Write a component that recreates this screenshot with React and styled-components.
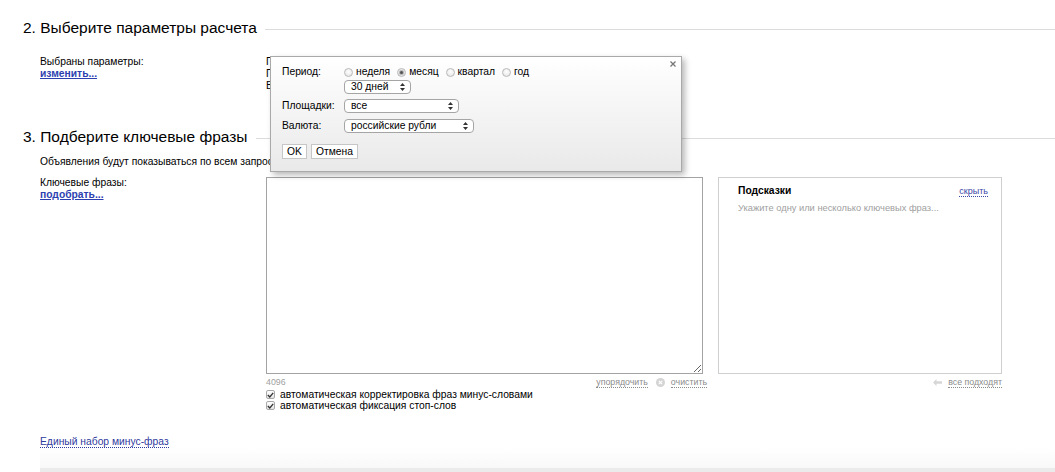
import React from "react";
import styled, { createGlobalStyle } from "styled-components";

const GlobalStyle = createGlobalStyle`
  html, body {
    margin: 0;
    padding: 0;
    background: #fff;
  }
  body {
    font-family: "Liberation Sans", Arial, sans-serif;
    font-size: 10.3px;
    color: #000;
  }
`;

const Page = styled.div`
  position: relative;
  width: 1055px;
  height: 472px;
  overflow: hidden;
  box-sizing: border-box;
  padding: 18px 0 0 23px;
`;

const Heading = styled.h2`
  display: flex;
  align-items: center;
  margin: ${(p) => p.$top || 0}px 0 0;
  font-size: 15.5px;
  font-weight: normal;
  line-height: 20px;
  white-space: nowrap;

  &::after {
    content: "";
    flex: 1;
    height: 1px;
    margin: 2px 0 0 8px;
    background: #dcdcdc;
  }
`;

const Section = styled.div`
  padding-left: 17px;
`;

const Row = styled.div`
  display: flex;
  margin-top: ${(p) => p.$top || 0}px;
  line-height: 12px;
`;

const Label = styled.div`
  flex: 0 0 ${(p) => p.$width}px;
`;

const BoldLink = styled.a`
  display: inline-block;
  font-weight: bold;
  color: #2c3fb1;
  text-decoration: underline;
`;

const ParamsInfo = styled.div`
  position: relative;
  flex: 1;
  white-space: nowrap;
`;

const Notice = styled.div`
  margin-top: 9px;
  line-height: 12px;
  white-space: nowrap;
`;

/* popup */
const Popup = styled.div`
  position: absolute;
  left: 4px;
  top: 0;
  z-index: 5;
  width: 412px;
  height: 116px;
  box-sizing: border-box;
  padding: 9px 0 0 11px;
  border: 1px solid #a9a9a9;
  background: linear-gradient(#ffffff, #e9e9e9);
  box-shadow: 3px 3px 6px rgba(0, 0, 0, 0.28);
`;

const Close = styled.span`
  position: absolute;
  right: 5px;
  top: 4px;
  width: 6px;
  height: 6px;
  display: flex;
`;

const FormRow = styled.div`
  display: flex;
  align-items: ${(p) => (p.$center ? "center" : "flex-start")};
  margin-top: ${(p) => p.$top || 0}px;
`;

const FormLabel = styled.div`
  flex: 0 0 62px;
  line-height: 12px;
`;

const FormField = styled.div`
  display: flex;
  flex-direction: column;
  align-items: flex-start;
`;

const Radios = styled.div`
  display: flex;
  align-items: center;
  height: 12px;
`;

const RadioItem = styled.label`
  display: flex;
  align-items: center;
  margin-right: 7px;
`;

const RadioDot = styled.span`
  position: relative;
  width: 9px;
  height: 9px;
  box-sizing: border-box;
  margin-right: 3px;
  border-radius: 50%;
  border: 1px solid #b9b9b9;
  background: radial-gradient(circle at 50% 40%, #ffffff, #e2e2e2);

  &::after {
    content: "";
    display: ${(p) => (p.$checked ? "block" : "none")};
    position: absolute;
    left: 2px;
    top: 2px;
    width: 3px;
    height: 3px;
    border-radius: 50%;
    background: #555;
    box-shadow: 0 0 1px 1px #aaa;
  }
`;

const Select = styled.div`
  display: flex;
  align-items: center;
  justify-content: space-between;
  width: ${(p) => p.$width}px;
  height: 14px;
  box-sizing: border-box;
  margin-top: ${(p) => p.$top || 0}px;
  padding: 0 5px 0 6px;
  border: 1px solid #a5a5a5;
  border-radius: 4px;
  background: #fff;
  line-height: 12px;
`;

const Buttons = styled.div`
  display: flex;
  gap: 4px;
  margin-top: 11px;
`;

const Button = styled.button`
  width: ${(p) => p.$width}px;
  height: 15px;
  padding: 0;
  border: 1px solid #c6c6c6;
  background: #fff;
  font-family: inherit;
  font-size: 10.3px;
  line-height: 12px;
  color: #000;
`;

/* editor */
const Editor = styled.div`
  display: grid;
  grid-template-columns: 437px 284px;
  column-gap: 15px;
`;

const TextArea = styled.textarea`
  display: block;
  width: 437px;
  height: 197px;
  box-sizing: border-box;
  margin: 0;
  border: 1px solid #a3a3a3;
  resize: both;
  font-family: inherit;
`;

const Hints = styled.div`
  height: 197px;
  box-sizing: border-box;
  padding: 7px 13px 0 19px;
  border: 1px solid #cfcfcf;
`;

const HintsHead = styled.div`
  display: flex;
  justify-content: space-between;
  align-items: center;
  line-height: 12px;
`;

const HintsTitle = styled.b`
  font-weight: bold;
`;

const HintsText = styled.div`
  margin-top: 5px;
  line-height: 12px;
  color: #a0a0a0;
  font-size: 9.3px;
`;

const DotLink = styled.a`
  color: ${(p) => p.$color || "#8c8c8c"};
  font-size: ${(p) => p.$size || 8.8}px;
  text-decoration: none;
  border-bottom: 1px dotted ${(p) => p.$color || "#8c8c8c"};
  line-height: 10px;
`;

const Meta = styled.div`
  display: flex;
  align-items: center;
  justify-content: ${(p) => p.$justify || "space-between"};
  height: 12px;
  margin: 2px ${(p) => p.$right || 0}px 0 0;
  font-size: 8.8px;
  color: #a0a0a0;
`;

const MetaActions = styled.div`
  display: flex;
  align-items: center;
  gap: 8px;
`;

const Clear = styled.span`
  display: flex;
  align-items: center;
`;

const IconWrap = styled.span`
  display: flex;
  margin-right: ${(p) => p.$gap || 0}px;
`;

const CheckRow = styled.label`
  display: flex;
  align-items: center;
  height: 11px;
  margin-top: ${(p) => p.$top || 0}px;
  line-height: 11px;
`;

const CheckBox = styled.span`
  display: flex;
  align-items: center;
  justify-content: center;
  width: 9px;
  height: 9px;
  box-sizing: border-box;
  margin-right: 5px;
  border: 1px solid #a8a8a8;
  border-radius: 2px;
  background: linear-gradient(#fff, #e6e6e6);
`;

const MinusLink = styled.a`
  display: inline-block;
  margin-top: 25px;
  line-height: 11px;
  color: #2f3a9e;
  text-decoration: none;
  border-bottom: 1px dotted #2f3a9e;
`;

const Footer = styled.div`
  margin: 0 0 0 17px;
  height: 20px;
  background: linear-gradient(#ffffff, #f8f8f8);
  border-bottom: 8px solid #ebebeb;
`;

const Arrows = () => (
  <svg width="5" height="8" viewBox="0 0 5 8">
    <path d="M2.5 0 L5 3 L0 3 Z M0 5 L5 5 L2.5 8 Z" fill="#333" />
  </svg>
);

function SelectBox({ width, top, children }) {
  return (
    <Select $width={width} $top={top}>
      <span>{children}</span>
      <Arrows />
    </Select>
  );
}

function Radio({ checked, children }) {
  return (
    <RadioItem>
      <RadioDot $checked={checked} />
      {children}
    </RadioItem>
  );
}

function Check({ top, children }) {
  return (
    <CheckRow $top={top}>
      <CheckBox>
        <svg width="7" height="6" viewBox="0 0 7 6">
          <path d="M0.8 3 L2.8 5 L6.2 0.8" stroke="#333" strokeWidth="1.3" fill="none" />
        </svg>
      </CheckBox>
      {children}
    </CheckRow>
  );
}

function PeriodPopup() {
  return (
    <Popup>
      <Close>
        <svg width="6" height="6" viewBox="0 0 6 6">
          <path d="M0.5 0.5 L5.5 5.5 M5.5 0.5 L0.5 5.5" stroke="#777" strokeWidth="1.3" />
        </svg>
      </Close>
      <FormRow>
        <FormLabel>Период:</FormLabel>
        <FormField>
          <Radios>
            <Radio>неделя</Radio>
            <Radio checked>месяц</Radio>
            <Radio>квартал</Radio>
            <Radio>год</Radio>
          </Radios>
          <SelectBox width={67} top={2}>
            30 дней
          </SelectBox>
        </FormField>
      </FormRow>
      <FormRow $center $top={5}>
        <FormLabel>Площадки:</FormLabel>
        <SelectBox width={115}>все</SelectBox>
      </FormRow>
      <FormRow $center $top={6}>
        <FormLabel>Валюта:</FormLabel>
        <SelectBox width={130}>российские рубли</SelectBox>
      </FormRow>
      <Buttons>
        <Button $width={25}>OK</Button>
        <Button $width={47}>Отмена</Button>
      </Buttons>
    </Popup>
  );
}

export default function App() {
  return (
    <>
      <GlobalStyle />
      <Page>
        <Heading>2. Выберите параметры расчета</Heading>
        <Section>
          <Row $top={18}>
            <Label $width={226}>
              Выбраны параметры:
              <br />
              <BoldLink href="#">изменить...</BoldLink>
            </Label>
            <ParamsInfo>
              Период: месяц (30 дней)
              <br />
              Площадки: все
              <br />
              Валюта: российские рубли
              <PeriodPopup />
            </ParamsInfo>
          </Row>
        </Section>

        <Heading $top={35}>3. Подберите ключевые фразы</Heading>
        <Section>
          <Notice>Объявления будут показываться по всем запросам, содержащим ключевые фразы</Notice>
          <Row $top={9}>
            <Label $width={226}>
              Ключевые фразы:
              <br />
              <BoldLink href="#">подобрать...</BoldLink>
            </Label>
            <div>
              <Editor>
                <TextArea />
                <Hints>
                  <HintsHead>
                    <HintsTitle>Подсказки</HintsTitle>
                    <DotLink href="#" $color="#3b46a6" $size={9}>
                      скрыть
                    </DotLink>
                  </HintsHead>
                  <HintsText>Укажите одну или несколько ключевых фраз...</HintsText>
                </Hints>
                <Meta $right={-4}>
                  <span>4096</span>
                  <MetaActions>
                    <DotLink href="#">упорядочить</DotLink>
                    <Clear>
                      <IconWrap $gap={6}>
                        <svg width="9" height="9" viewBox="0 0 9 9">
                          <circle cx="4.5" cy="4.5" r="4.5" fill="#d4d4d4" />
                          <path d="M2.8 2.8 L6.2 6.2 M6.2 2.8 L2.8 6.2" stroke="#fff" strokeWidth="1.2" />
                        </svg>
                      </IconWrap>
                      <DotLink href="#">очистить</DotLink>
                    </Clear>
                  </MetaActions>
                </Meta>
                <Meta $justify="flex-end">
                  <IconWrap $gap={6}>
                    <svg width="9" height="7" viewBox="0 0 9 7">
                      <path d="M0 3.5 L3.5 0 L3.5 2.3 L9 2.3 L9 4.7 L3.5 4.7 L3.5 7 Z" fill="#d6d6d6" />
                    </svg>
                  </IconWrap>
                  <DotLink href="#">все подходят</DotLink>
                </Meta>
              </Editor>
              <Check top={1}>автоматическая корректировка фраз минус-словами</Check>
              <Check>автоматическая фиксация стоп-слов</Check>
            </div>
          </Row>
          <MinusLink href="#">Единый набор минус-фраз</MinusLink>
        </Section>
        <Footer />
      </Page>
    </>
  );
}
